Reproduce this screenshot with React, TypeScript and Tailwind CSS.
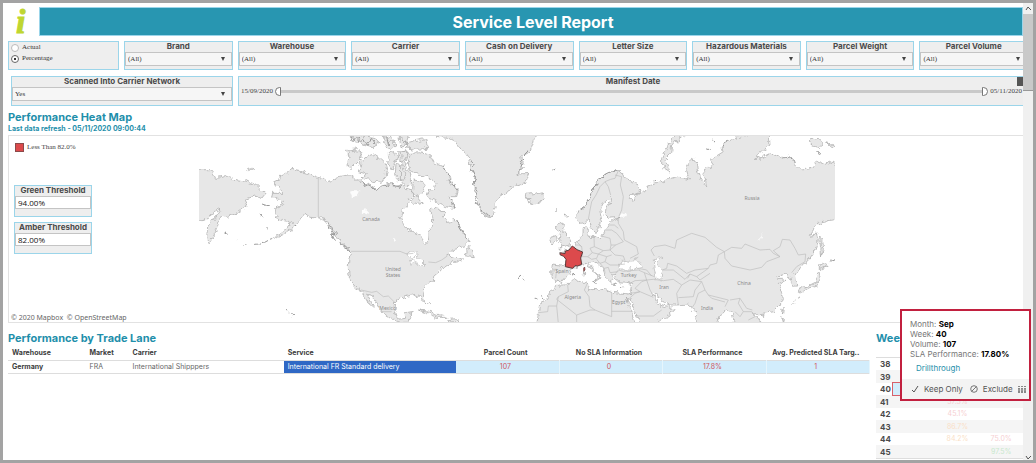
import { ReactNode } from 'react';

const filters = [
  'Brand',
  'Warehouse',
  'Carrier',
  'Cash on Delivery',
  'Letter Size',
  'Hazardous Materials',
  'Parcel Weight',
  'Parcel Volume',
];

const weeks = [
  { week: '38' },
  { week: '39' },
  { week: '40', selected: true },
  { week: '41', first: '37.3%', firstColor: 'text-[#f6cfd2]' },
  { week: '42', first: '45.1%', firstColor: 'text-[#f6cfd2]' },
  { week: '43', first: '86.7%', firstColor: 'text-[#fadfc8]' },
  { week: '44', first: '84.2%', firstColor: 'text-[#fadfc8]', second: '75.0%', secondColor: 'text-[#f6cfd2]' },
  { week: '45', second: '97.5%', secondColor: 'text-[#c9e8cd]' },
];

const land = [
  // north america
  'M370 142L345 132L318 125L288 118L275 128L258 137L252 148L235 156L248 172L262 178L262 190L232 190L230 200L248 208L265 210L258 228L242 235L240 248L250 256L240 265L262 272L290 275L275 295L255 310L225 328L262 315L292 298L305 280L320 262L330 250L345 262L370 264L390 270L402 282L410 305L428 320L440 345L460 360L468 375L462 385L460 410L462 435L470 450L480 470L498 480L510 502L520 520L538 535L530 518L515 490L528 492L550 525L560 545L590 568L625 580L645 580L640 570L655 548L635 550L628 562L608 565L600 540L602 515L620 503L660 493L677 502L690 525L686 500L683 480L695 465L715 455L716 442L730 430L737 415L765 405L775 392L787 398L802 388L792 383L778 382L755 375L780 358L805 350L823 330L805 310L793 290L780 265L770 278L760 280L745 262L747 248L730 235L715 232L707 242L713 265L712 285L703 300L700 335L690 347L680 320L660 308L640 300L622 285L617 262L622 240L640 222L655 208L655 190L648 180L632 175L618 165L600 170L585 160L560 165L545 178L530 168L510 160L500 150L480 150L470 135L455 135L430 140L410 150L398 155L385 145Z',
  'M815 352L826 350L830 362L838 380L822 378L808 378L816 366Z',
  'M458 60L480 57L503 70L490 95L470 115L455 105L462 85Z',
  'M495 95L515 80L535 72L555 85L570 100L577 125L570 145L555 157L520 150L498 142L515 132L490 125L500 108Z',
  'M580 70L600 68L607 90L590 118L578 100Z',
  'M610 65L642 66L625 95L607 88Z',
  'M603 105L622 105L632 130L628 150L608 150L600 135Z',
  'M465 10L500 18L540 22L555 40L530 50L505 42L480 34Z',
  'M562 22L590 16L602 48L582 58L570 40Z',
  'M612 20L640 18L632 45L618 50Z',
  'M630 40L660 32L692 26L697 55L668 58L632 54Z',
  'M645 70L675 68L705 75L715 95L745 110L760 135L765 160L790 182L785 200L765 200L777 235L755 230L740 225L715 210L700 205L690 192L715 178L722 155L700 140L675 135L660 128L645 120L640 98Z',
  'M618 70L632 62L640 72L630 110L645 125L650 155L632 172L616 150Z',
  'M640 205L665 198L685 220L660 224Z',
  'M655 150L685 158L692 178L672 200L652 190Z',
  // greenland, iceland
  'M720 0L720 18L755 22L780 35L800 60L820 85L825 110L840 140L837 175L847 200L847 225L865 255L887 263L900 230L905 208L925 195L945 175L965 165L990 158L1005 130L970 132L985 100L977 82L1005 65L1015 40L1020 18L1020 0Z',
  'M993 190L1010 188L1015 195L1040 188L1047 203L1035 218L1017 222L1000 215L1005 205L990 207Z',
  // britain, ireland
  'M1085 285L1105 278L1103 300L1120 320L1127 333L1125 348L1095 354L1103 337L1093 327L1097 310L1085 302Z',
  'M1067 322L1085 316L1087 335L1070 345L1063 336Z',
  // eurasia and north africa
  'M1270 122L1250 122L1225 140L1205 155L1195 180L1180 210L1165 235L1147 240L1145 262L1155 280L1170 278L1180 268L1193 300L1205 310L1213 290L1220 265L1215 245L1230 215L1247 200L1245 215L1233 235L1230 255L1240 265L1272 262L1255 270L1240 285L1230 300L1220 318L1200 322L1180 322L1175 310L1180 295L1165 293L1163 320L1145 330L1140 345L1130 352L1120 360L1110 358L1112 366L1095 368L1110 380L1113 405L1095 408L1072 405L1070 425L1072 445L1083 452L1100 458L1110 445L1125 430L1130 415L1150 412L1163 402L1175 400L1185 415L1200 430L1207 442L1198 453L1215 442L1205 430L1190 412L1180 395L1190 390L1205 400L1220 412L1227 430L1235 445L1247 457L1253 443L1247 432L1262 430L1257 445L1270 455L1295 457L1310 460L1307 480L1303 492L1285 490L1250 487L1230 480L1215 477L1195 475L1180 480L1177 460L1150 450L1125 455L1105 465L1085 465L1065 485L1055 505L1035 520L1030 550L1025 590L1325 590L1305 535L1293 502L1300 515L1305 508L1320 545L1342 590L1385 580L1395 565L1420 560L1435 540L1420 525L1410 530L1395 525L1385 510L1375 495L1385 492L1400 515L1425 525L1445 525L1480 522L1490 540L1503 545L1510 590L1560 590L1575 555L1595 540L1610 545L1622 590L1700 590L1690 565L1675 552L1705 550L1735 545L1755 525L1765 500L1757 480L1753 460L1770 452L1760 445L1745 445L1750 435L1770 430L1782 440L1788 455L1795 470L1805 465L1802 440L1800 430L1820 410L1845 385L1860 360L1870 330L1865 312L1843 316L1855 300L1875 275L1930 268L1930 112L1910 95L1885 102L1865 95L1850 115L1820 120L1805 105L1785 75L1765 85L1725 70L1695 85L1680 85L1700 65L1725 45L1722 0L1645 18L1595 35L1580 50L1585 65L1545 90L1555 105L1525 120L1535 170L1520 150L1507 120L1503 90L1490 85L1480 100L1475 125L1483 150L1445 140L1395 155L1360 165L1350 185L1325 190L1315 215L1303 205L1310 195L1335 185L1330 165L1285 140L1280 130Z',
  'M1490 10L1450 25L1430 50L1425 75L1410 90L1425 125L1400 110L1400 85L1415 55L1440 18Z',
  'M12 122L50 122L62 145L100 138L120 148L160 155L185 165L200 180L212 190L200 205L180 198L150 208L158 225L130 245L95 262L78 258L60 310L40 345L35 320L38 290L65 255L78 235L60 245L30 270L0 275L0 122Z',
  // japan, sakhalin and the smaller islands
  'M1810 490L1815 475L1845 465L1865 455L1868 430L1875 420L1878 445L1865 468L1840 475Z',
  'M1870 410L1885 400L1897 405L1880 416Z',
  'M1874 318L1882 330L1886 350L1880 378L1876 350Z',
  'M1166 425L1172 425L1171 438L1165 438Z',
  'M1845 30L1870 25L1885 35L1875 52L1850 48Z',
  'M1895 38L1918 45L1910 52Z',
  'M155 118L165 112L177 117L170 122Z',
  'M1698 556L1707 554L1705 563Z',
  'M1760 540L1768 535L1766 552Z',
  'M1760 560L1768 565L1766 580Z',
  'M670 540L700 543L735 556L755 562L725 562L690 548Z',
  'M758 568L785 566L792 575L760 576Z',
];

const specks = [
  'M88 312L98 316M120 328L132 333M150 342L165 340M178 343L195 342M200 338L222 332M204 222L222 228M198 255L204 264M218 292L220 298M270 545L282 545M286 550L297 558',
  'M300 290L308 284M412 312L422 335M1082 240L1086 246M1111 262L1114 256M970 441L975 443M983 445L987 447M1072 120L1078 117M700 518L712 525M1022 508L1030 508M1038 500L1046 504',
  'M1126 436L1140 430M1190 455L1205 460M1245 462L1262 463M1275 470L1285 470M1550 28L1560 40M1900 400L1918 388M1790 525L1800 515M1808 508L1812 500M1538 55L1544 62M1375 150L1385 148M1864 68L1878 75',
  'M467 18L475 34L486 22L494 38L507 26L516 44L528 24L540 42M575 20L580 44L592 30M620 25L635 40M395 272L402 295L414 312M402 278L412 298L425 314M430 330L450 350L466 370M440 338L462 358',
];

const roughCoast = [
  'M825 88L838 105L828 120L842 145L835 165L850 185L838 205L852 225L868 250L885 258',
  'M745 112L758 132L768 150L778 172L788 186M765 202L772 218L778 236M782 270L792 290L806 312L820 328',
  'M1148 240L1166 232L1180 210L1196 178L1208 152L1228 138L1250 124L1270 124',
  'M1765 82L1785 78L1795 95L1805 108L1798 88M1605 30L1590 42L1580 52',
  'M990 78L976 92L985 112L968 128M1000 62L988 74',
  'M495 152L515 165L545 180L562 168L590 164L618 172',
];

const borders = [
  'M370 142V264L388 272L396 282',
  'M468 364H615L635 372L655 370M700 396L722 398L740 390L757 378',
  'M498 480L530 487L545 484L565 500L580 498L600 518',
  'M560 545L590 545',
  // scandinavia
  'M1180 268L1185 240L1190 215L1203 195L1215 170L1230 155L1247 148M1230 155L1240 170L1247 195M1270 122L1260 145L1247 148M1260 135L1280 140L1276 165L1285 200L1280 240L1272 258',
  // europe
  'M1072 418H1085L1082 445M1113 405L1130 412M1145 335L1160 350L1163 378M1140 345L1152 345L1160 350M1197 322L1198 350L1185 355L1192 368L1178 380H1160M1198 350L1225 362L1245 360L1248 345L1245 325L1220 318M1192 368L1210 372L1225 362M1210 372L1205 385L1190 388L1178 380',
  'M1240 285L1258 285L1270 295M1230 300H1250L1265 310L1285 335L1262 345L1248 345M1270 262V280L1285 305L1288 330L1325 350L1330 372L1305 385M1262 345L1245 360L1260 375L1285 378L1290 392M1210 372L1235 380L1230 395L1215 400L1205 388M1235 380L1250 375M1230 395L1245 405L1268 405L1290 402M1228 415L1240 412L1245 428L1270 425M1215 400L1228 415L1230 430',
  'M1262 430L1270 420L1285 424L1330 420L1348 428L1355 450L1320 452L1305 460M1330 415L1355 420L1370 438M1348 428L1378 440',
  // africa and the middle east
  'M1118 465L1120 485L1090 500L1085 528L1060 528L1058 545L1030 548M1090 500L1085 508L1145 555L1185 540L1200 540M1085 528L1090 580M1145 555L1145 580M1177 460L1168 480L1182 500L1185 530L1200 540L1250 560M1250 487V560M1250 544L1315 544M1307 490L1335 485L1320 475L1340 455L1355 450L1365 480L1375 497M1303 505L1320 490L1335 485L1375 502M1325 558L1375 558L1400 540',
  'M1355 450L1375 448L1405 452L1435 448L1460 465L1445 490L1450 525M1460 465L1485 450L1520 455L1500 480L1495 500L1450 503M1520 455L1530 480L1510 490L1500 520L1490 535M1530 480L1540 495L1600 510L1590 530M1540 495L1550 505L1590 516M1605 510L1635 505L1630 520L1645 545L1635 560L1620 545M1645 545L1670 545L1680 560L1660 570M1635 505L1655 535L1672 540',
  // central asia and china
  'M1378 378L1368 360L1378 350L1410 345L1440 355L1445 330L1490 310L1530 322L1565 352L1588 365L1570 375L1565 400L1545 405L1540 415L1500 420L1475 430L1445 408L1418 400L1415 415L1402 420',
  'M1588 365L1590 385L1610 408L1665 420L1700 412L1715 395L1755 380L1735 370L1725 358L1695 360L1650 342L1640 355L1610 352L1588 365',
  'M1755 380L1735 362L1755 350L1762 328L1785 330L1800 355L1810 375L1832 372L1830 395L1805 410L1790 428',
  'M1402 420L1435 420L1470 448L1485 432L1505 440L1540 415M1485 432L1478 445M1505 440L1515 450L1545 430',
];

const countries = [
  { name: 'Canada', x: 528, y: 272 },
  { name: 'United', x: 594, y: 424 },
  { name: 'States', x: 594, y: 440 },
  { name: 'Mexico', x: 578, y: 539 },
  { name: 'Spain', x: 1101, y: 429 },
  { name: 'Algeria', x: 1133, y: 506 },
  { name: 'Egypt', x: 1271, y: 521 },
  { name: 'Turkey', x: 1301, y: 440 },
  { name: 'Iran', x: 1407, y: 476 },
  { name: 'India', x: 1536, y: 541 },
  { name: 'China', x: 1647, y: 465 },
  { name: 'Russia', x: 1671, y: 211 },
];

function WorldMap() {
  return (
    <svg viewBox="12 18 1908 558" className="block w-[636px] shrink-0" role="img" aria-label="Performance Heat Map">
      <defs>
        <filter id="coast" x="-2%" y="-2%" width="104%" height="104%">
          <feTurbulence type="fractalNoise" baseFrequency="0.07" numOctaves="2" seed="4" result="noise" />
          <feDisplacementMap in="SourceGraphic" in2="noise" scale="20" xChannelSelector="R" yChannelSelector="G" />
        </filter>
      </defs>
      <g filter="url(#coast)" strokeLinejoin="round">
        <path d={land.join('')} fill="#e7e7e7" stroke="#a3a3a3" strokeWidth="2" />
        <path d={specks.join('')} fill="none" stroke="#999" strokeWidth="3" />
        <path d={roughCoast.join('')} fill="none" stroke="#999" strokeWidth="3" />
        <g fill="#fff" stroke="#b4b4b4" strokeWidth="2">
          <path d="M1270 405L1280 390L1305 395L1325 385L1330 395L1342 412L1305 420L1275 420Z" />
          <path d="M1375 390L1400 382L1387 402L1403 430L1400 450L1383 445L1377 412Z" />
          <path d="M635 368L655 362L670 378L658 384L650 408L644 390L662 380L680 395L690 405L675 410L660 395Z" />
        </g>
        <g fill="#fcfcfc">
          <path d="M465 185L480 180L494 186L485 198L472 205Z" />
          <path d="M500 246L512 238L520 246L508 255Z" />
          <path d="M594 324L602 326L603 340L596 336Z" />
          <path d="M1683 335L1697 322L1702 308L1700 325Z" />
          <circle cx="1285" cy="256" r="8" />
        </g>
      </g>
      <path d={borders.join('')} fill="none" stroke="#bdbdbd" strokeWidth="2" />
      <path
        d="M1132 348L1146 359L1163 366L1157 384L1160 403L1148 408L1140 407L1133 415L1111 410L1113 388L1106 379L1095 374L1096 368L1110 371L1111 363L1121 361Z"
        fill="#dc4a4c"
        stroke="#5c3a3a"
        strokeWidth="3"
      />
      <path d="M1166 414L1169 411L1170 420L1166 424Z" fill="#dc4a4c" stroke="#5c3a3a" strokeWidth="2" />
      <g fill="#8a8a8a" fontSize="15" textAnchor="middle" className="font-['Noto_Sans',sans-serif]">
        {countries.map(({ name, x, y }) => (
          <text key={name} x={x} y={y}>{name}</text>
        ))}
      </g>
    </svg>
  );
}

function SelectBox({ label, value }: { label: string; value: string }) {
  return (
    <label className="block w-full text-center text-[8px] leading-[8px] font-bold text-[#4a4a4a]">
      {label}
      <span className="relative mt-[2px] block">
        <select className="block h-[14px] w-full appearance-none border border-[#c4c4c4] bg-[#f6f6f6] pl-[2px] font-['Liberation_Serif',serif] text-[7px] font-normal text-[#333]">
          <option>{value}</option>
        </select>
        <svg viewBox="0 0 4 4" className="pointer-events-none absolute top-[5px] right-[7px] size-1" aria-hidden="true">
          <path d="M0 0H4L2 4Z" fill="#444" />
        </svg>
      </span>
    </label>
  );
}

function Panel({ className, children }: { className: string; children: ReactNode }) {
  return <div className={`border border-[#9bd5ea] bg-[#eee] ${className}`}>{children}</div>;
}

function Threshold({ label, value }: { label: string; value: string }) {
  return (
    <Panel className="h-8 w-[78px]">
      <label className="block text-center text-[8px] leading-[9px] font-bold text-[#4a4a4a]">
        {label}
        <input
          defaultValue={value}
          className="mt-px block h-[13px] w-full border border-[#c4c4c4] bg-white pl-[2px] font-['Open_Sans',sans-serif] text-[8px] font-normal text-[#111]"
        />
      </label>
    </Panel>
  );
}

function DateRange() {
  const track =
    'pointer-events-none absolute inset-0 h-[9px] w-full appearance-none bg-transparent [&::-webkit-slider-thumb]:h-[9px] [&::-webkit-slider-thumb]:w-[6px] [&::-webkit-slider-thumb]:appearance-none [&::-webkit-slider-thumb]:border [&::-webkit-slider-thumb]:border-[#777] [&::-webkit-slider-thumb]:bg-white';
  return (
    <div className="mt-[2px] flex items-center gap-[2px] pr-[5px] pl-[2px] font-['Liberation_Serif',serif] text-[7px] leading-[9px] text-[#444]">
      <span>15/09/2020</span>
      <div className="relative h-[9px] flex-1">
        <div className="mx-1 mt-[3px] h-[3px] bg-[#c9c9c9]" />
        <input type="range" aria-label="From date" defaultValue={0} className={`${track} [&::-webkit-slider-thumb]:rounded-l-full`} />
        <input type="range" aria-label="To date" defaultValue={100} className={`${track} [&::-webkit-slider-thumb]:rounded-r-full`} />
      </div>
      <span>05/11/2020</span>
    </div>
  );
}

function TradeLane() {
  const head = 'text-left font-bold text-[#3d3d3d] pl-1';
  const metricHead = 'pr-1 text-center font-bold whitespace-nowrap text-[#3d3d3d]';
  const metric = 'border-r border-[#e6f5fc] bg-[#d2edfc] pr-1 text-center text-[#d05560]';
  return (
    <section className="min-w-0 flex-1">
      <h2 className="text-[11px] leading-[14px] font-bold text-[#1f8fab]">Performance by Trade Lane</h2>
      <table className="w-full table-fixed border-collapse text-[7px] leading-[11px] text-[#666]">
        <colgroup>
          <col className="w-[9%]" />
          <col className="w-[5%]" />
          <col className="w-[18%]" />
          <col className="w-[20%]" />
          <col className="w-[12%]" />
          <col className="w-[12%]" />
          <col className="w-[12%]" />
          <col className="w-[12%]" />
        </colgroup>
        <thead>
          <tr className="h-[15px] border-b border-[#ddd]">
            <th className={head}>Warehouse</th>
            <th className={head}>Market</th>
            <th className={head}>Carrier</th>
            <th className={head}>Service</th>
            <th className={metricHead}>Parcel Count</th>
            <th className={metricHead}>No SLA Information</th>
            <th className={metricHead}>SLA Performance</th>
            <th className={metricHead}>Avg. Predicted SLA Targ..</th>
          </tr>
        </thead>
        <tbody>
          <tr className="h-[13px] border-b border-[#ddd]">
            <th className={head}>Germany</th>
            <td className="pl-1">FRA</td>
            <td className="pl-1">International Shipppers</td>
            <td className="bg-[#2f68c5] pl-1 text-white">International FR Standard delivery</td>
            <td className={metric}>107</td>
            <td className={metric}>0</td>
            <td className={metric}>17.8%</td>
            <td className={metric}>1</td>
          </tr>
        </tbody>
      </table>
    </section>
  );
}

function Weekly() {
  return (
    <section className="w-[147px] shrink-0">
      <h2 className="h-[27px] border-b border-[#ddd] text-[11px] leading-[14px] font-bold text-[#1f8fab]">Week</h2>
      <table className="h-[101px] w-full table-fixed border-collapse border-b border-[#ddd] text-[7px] leading-[10px]">
        <tbody>
          {weeks.map(({ week, selected, first, firstColor, second, secondColor }) => (
            <tr key={week} className="even:bg-[#f5f5f5]">
              <th className="w-4 pl-1 text-left text-[8px] font-bold text-[#4a4a4a]">{week}</th>
              <td className={selected ? 'border border-[#d8606a] bg-[#d2edfc]' : ''} />
              <td className={`text-center ${firstColor ?? ''}`}>{first}</td>
              <td className={`text-center ${secondColor ?? ''}`}>{second}</td>
            </tr>
          ))}
        </tbody>
      </table>
    </section>
  );
}

function MarkTooltip() {
  const rows = [
    ['Month', 'Sep'],
    ['Week', '40'],
    ['Volume', '107'],
    ['SLA Performance', '17.80%'],
  ];
  return (
    <div className="absolute top-[306px] -right-[8px] flex h-[92px] w-[131px] flex-col border-2 border-[#c2203f] bg-white text-[8px] leading-[10px] text-[#777]">
      <div className="flex-1 pt-2 pl-2 whitespace-nowrap">
        {rows.map(([label, value]) => (
          <p key={label}>
            {label}: <b className="text-black">{value}</b>
          </p>
        ))}
        <a href="#drillthrough" className="mt-1 ml-[6px] block text-[#1f8fab]">Drillthrough</a>
      </div>
      <div className="flex h-[20px] items-center gap-[5px] bg-[#f3f3f3] pl-[9px] text-[#555]">
        <button className="flex items-center gap-[5px] whitespace-nowrap">
          <svg viewBox="0 0 8 8" className="size-2" fill="none" stroke="currentColor" aria-hidden="true">
            <path d="M1 5L3 7L7 1" />
          </svg>
          Keep Only
        </button>
        <button className="ml-[2px] flex items-center gap-[5px]">
          <svg viewBox="0 0 8 8" className="size-2" fill="none" stroke="currentColor" strokeWidth="0.8" aria-hidden="true">
            <circle cx="4" cy="4" r="3.3" />
            <path d="M1.8 6.2L6.2 1.8" />
          </svg>
          Exclude
        </button>
        <button aria-label="View data">
          <svg viewBox="0 0 8 7" className="h-[7px] w-2" fill="#888" aria-hidden="true">
            <path d="M0 0H2V1H0ZM3 0H5V1H3ZM6 0H8V1H6ZM0 2H2V7H0ZM3 2H5V7H3ZM6 2H8V7H6Z" />
            <path d="M0 4H8" stroke="#ccc" strokeWidth="0.5" />
          </svg>
        </button>
      </div>
    </div>
  );
}

function Scrollbar() {
  return (
    <div className="flex w-[10px] shrink-0 flex-col bg-[#f0f0f0]" aria-hidden="true">
      <svg viewBox="0 0 10 11" className="h-[11px] w-[10px]" fill="none" stroke="#555">
        <path d="M3 7L5 4L8 7" />
      </svg>
      <div className="h-[77px] border-b border-[#999] bg-[#c9c9c9]" />
      <svg viewBox="0 0 10 4" className="mt-auto h-1 w-[10px]" fill="none" stroke="#555">
        <path d="M3 0L5 3L8 0" />
      </svg>
    </div>
  );
}

export default function App() {
  return (
    <div className="flex min-h-screen border-3 border-[#a3a3a3] bg-white font-['Inter',sans-serif]">
      <div className="relative min-w-0 flex-1">
        <main className="overflow-hidden pt-1 pl-[5px]">
          <header className="flex h-[29px]">
            <div className="w-[31px] shrink-0 pl-2 font-['Liberation_Serif',serif] text-[34px] leading-[30px] font-bold text-[#bfd630] italic [-webkit-text-stroke:1px_#bfd630]">
              i
            </div>
            <h1 className="flex-1 border border-[#9bd5ea] bg-[#2896b1] pl-1 text-center text-[16px] leading-[28px] font-bold text-white">
              Service Level Report
            </h1>
          </header>

          <div className="mt-[5px] -mr-[5px] flex gap-[5px]">
            <Panel className="h-[29px] w-[111px] pl-[2px] font-['Liberation_Serif',serif] text-[7px] leading-[11px] text-[#333]">
              {['Actual', 'Percentage'].map((mode) => (
                <label key={mode} className="flex items-center gap-[3px]">
                  <input
                    type="radio"
                    name="mode"
                    defaultChecked={mode === 'Percentage'}
                    className="size-2 appearance-none rounded-full border border-[#bbb] bg-white checked:border-[#666] checked:bg-[radial-gradient(#333_25%,white_35%)]"
                  />
                  {mode}
                </label>
              ))}
            </Panel>
            {filters.map((label) => (
              <Panel key={label} className="h-[29px] min-w-0 flex-1">
                <SelectBox label={label} value="(All)" />
              </Panel>
            ))}
          </div>

          <div className="mt-[6px] flex gap-[5px] pl-[3px]">
            <Panel className="h-[30px] w-[222px]">
              <SelectBox label="Scanned Into Carrier Network" value="Yes" />
            </Panel>
            <Panel className="relative -mr-[5px] h-[30px] flex-1">
              <h3 className="text-center text-[8px] leading-[8px] font-bold text-[#4a4a4a]">Manifest Date</h3>
              <DateRange />
              <button aria-label="Clear" className="absolute top-0 right-1 h-[9px] w-[6px] bg-[#555]" />
            </Panel>
          </div>

          <section className="pt-1 font-bold text-[#1f8fab]">
            <h2 className="text-[11px] leading-[14px]">Performance Heat Map</h2>
            <p className="pb-[2px] text-[7px] leading-[9px]">Last data refresh - 05/11/2020 09:00:44</p>
          </section>

          <div className="flex border border-r-0 border-[#e2e2e2]">
            <div className="flex w-[190px] shrink-0 flex-col">
              <div className="flex items-center gap-[3px] pt-[7px] pl-[6px] font-['Liberation_Serif',serif] text-[7px] leading-[9px] text-[#444]">
                <span className="size-[9px] border border-[#8c4a4a] bg-[#dc4a4c]" />
                Less Than 82.0%
              </div>
              <div className="mt-[33px] flex flex-col gap-[5px] pl-[5px]">
                <Threshold label="Green Threshold" value="94.00%" />
                <Threshold label="Amber Threshold" value="82.00%" />
              </div>
              <p className="mt-auto pl-[2px] font-['Noto_Sans',sans-serif] text-[7px] leading-[9px] text-[#666]">
                © 2020 Mapbox&nbsp; © OpenStreetMap
              </p>
            </div>
            <WorldMap />
          </div>

          <div className="mt-2 flex gap-[6px]">
            <TradeLane />
            <Weekly />
          </div>
        </main>
        <MarkTooltip />
      </div>
      <Scrollbar />
    </div>
  );
}
